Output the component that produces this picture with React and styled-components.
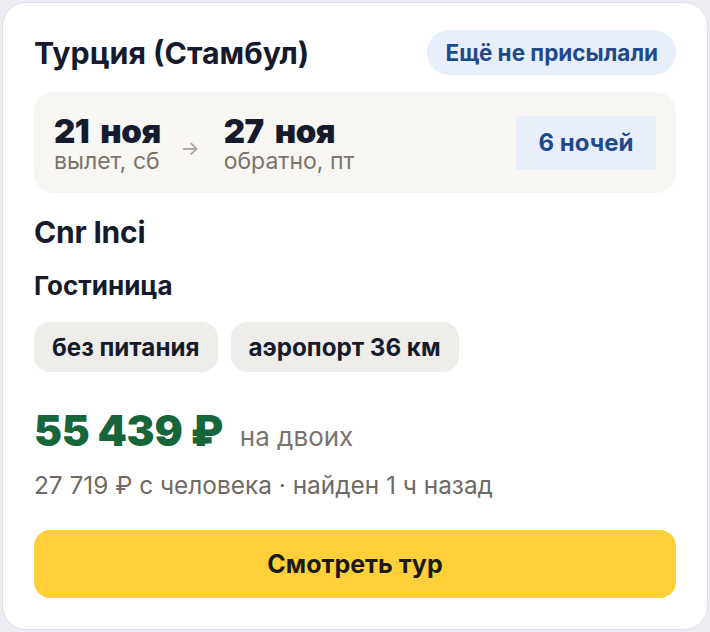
import React from 'react';
import styled, { createGlobalStyle } from 'styled-components';

const Global = createGlobalStyle`
  html, body {
    margin: 0;
    padding: 0;
    background: #eceef3;
  }
  body {
    font-family: Inter, "Noto Sans", sans-serif;
    color: #151b2c;
  }
`;

const Page = styled.div`
  padding: 2px;
  width: 706px;
  height: 628px;
`;

const Card = styled.div`
  box-sizing: border-box;
  height: 100%;
  background: #fff;
  border: 1px solid #dfe0e5;
  border-radius: 24px;
  padding: 27px 31px 31px;
  display: flex;
  flex-direction: column;
`;

const Header = styled.div`
  display: flex;
  justify-content: space-between;
  align-items: center;
`;

const Title = styled.h1`
  margin: 0;
  font-size: 30.3px;
  line-height: 36px;
  font-weight: 700;
`;

const Status = styled.span`
  background: #e8eefa;
  color: #1e4a8c;
  font-size: 22.5px;
  font-weight: 700;
  padding: 0 18px;
  height: 45px;
  display: inline-flex;
  align-items: center;
  border-radius: 23px;
`;

const Dates = styled.div`
  margin-top: 17px;
  background: #f7f6f3;
  border-radius: 20px;
  height: 101px;
  padding: 0 20px;
  display: flex;
  align-items: center;
`;

const DateCol = styled.div`
  display: flex;
  flex-direction: column;
`;

const Day = styled.span`
  font-size: 33px;
  font-weight: 900;
  line-height: 36px;
  letter-spacing: -0.5px;
  word-spacing: 5px;
`;

const Sub = styled.span`
  font-size: 23px;
  color: #7a746c;
  line-height: 24px;
`;

const Arrow = styled.span`
  color: #a7a29b;
  font-size: 20px;
  margin: 10px 24px 0 20px;
`;

const Nights = styled.div`
  margin-left: auto;
  background: #e8eefa;
  color: #1e4a8c;
  font-size: 24px;
  font-weight: 700;
  width: 140px;
  height: 54px;
  display: flex;
  align-items: center;
  justify-content: center;
`;

const Hotel = styled.h2`
  margin: 21px 0 0;
  font-size: 30px;
  line-height: 36px;
  font-weight: 700;
  letter-spacing: -0.2px;
`;

const Kind = styled.div`
  margin-top: 21px;
  font-size: 26px;
  line-height: 30px;
  font-weight: 700;
`;

const Tags = styled.div`
  margin-top: 21px;
  display: flex;
  gap: 13px;
`;

const Tag = styled.span`
  background: #efede9;
  border-radius: 16px;
  height: 50px;
  padding: 0 18px;
  display: inline-flex;
  align-items: center;
  font-size: 24.2px;
  font-weight: 700;
`;

const PriceRow = styled.div`
  margin-top: 35px;
  display: flex;
  align-items: baseline;
  gap: 17px;
`;

const Price = styled.span`
  color: #17653a;
  font-size: 42px;
  line-height: 48px;
  font-weight: 900;
  letter-spacing: -0.3px;
`;

const PriceNote = styled.span`
  color: #7a746c;
  font-size: 26px;
`;

const Meta = styled.div`
  margin-top: 16px;
  color: #6f6a64;
  font-size: 24.4px;
  line-height: 28px;
`;

const Button = styled.button`
  margin-top: auto;
  height: 68px;
  border: none;
  border-radius: 16px;
  background: #ffd03a;
  font-family: inherit;
  font-size: 25px;
  font-weight: 700;
  color: #1a1a1a;
  cursor: pointer;
`;

export default function App() {
  return (
    <>
      <Global />
      <Page>
        <Card>
          <Header>
            <Title>Турция (Стамбул)</Title>
            <Status>Ещё не присылали</Status>
          </Header>
          <Dates>
            <DateCol>
              <Day>21 ноя</Day>
              <Sub>вылет, сб</Sub>
            </DateCol>
            <Arrow>→</Arrow>
            <DateCol>
              <Day>27 ноя</Day>
              <Sub>обратно, пт</Sub>
            </DateCol>
            <Nights>6 ночей</Nights>
          </Dates>
          <Hotel>Cnr Inci</Hotel>
          <Kind>Гостиница</Kind>
          <Tags>
            <Tag>без питания</Tag>
            <Tag>аэропорт 36 км</Tag>
          </Tags>
          <PriceRow>
            <Price>55 439 ₽</Price>
            <PriceNote>на двоих</PriceNote>
          </PriceRow>
          <Meta>27 719 ₽ с человека · найден 1 ч назад</Meta>
          <Button>Смотреть тур</Button>
        </Card>
      </Page>
    </>
  );
}
